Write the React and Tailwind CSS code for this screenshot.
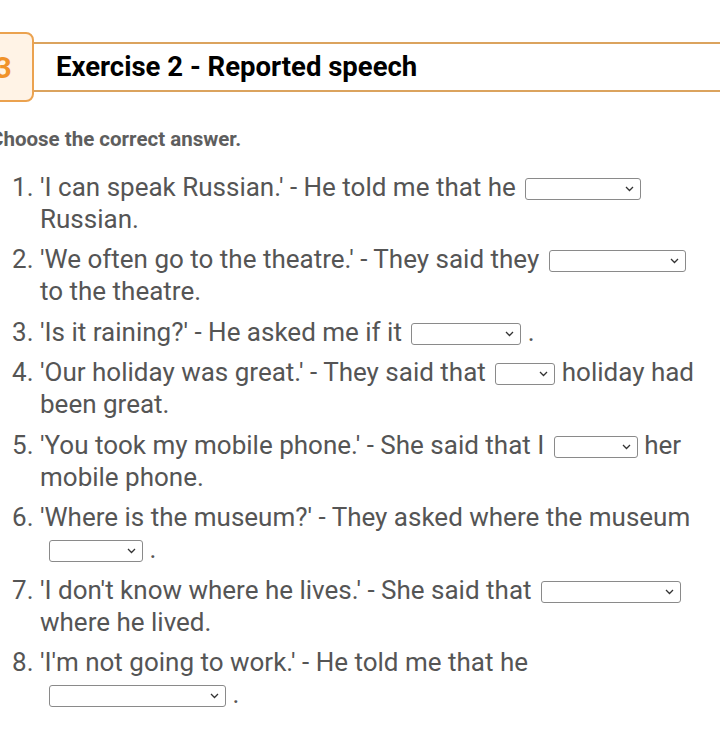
import React from 'react';

// A dropdown placeholder drawn like the browser's empty <select>
function Blank({ w, className = '' }) {
  return (
    <span
      className={`inline-flex h-[22px] items-center justify-end rounded-[3px] border border-[#8a8a8a] bg-white pr-[6px] align-middle ${className}`}
      style={{ width: w }}
    >
      <svg width="9" height="6" viewBox="0 0 9 6" fill="none">
        <path d="M1 1l3.5 3.5L8 1" stroke="#333" strokeWidth="1.3" />
      </svg>
    </span>
  );
}

const items = [
  <>'I can speak Russian.' - He told me that he <Blank w={116} className="ml-[3px]" /> Russian.</>,
  <>'We often go to the theatre.' - They said they <Blank w={137} className="ml-[3px]" /> to the theatre.</>,
  <>'Is it raining?' - He asked me if it <Blank w={110} className="ml-[3px]" /> .</>,
  <>'Our holiday was great.' - They said that <Blank w={60} className="ml-[3px]" /> holiday had been great.</>,
  <>'You took my mobile phone.' - She said that I <Blank w={84} className="ml-[3px]" /> her mobile phone.</>,
  <>'Where is the museum?' - They asked where the museum <Blank w={94} className="ml-[9px]" /> .</>,
  <>'I don't know where he lives.' - She said that <Blank w={140} className="ml-[3px]" /> where he lived.</>,
  <>'I'm not going to work.' - He told me that he <br /><Blank w={177} className="ml-[9px]" /> .</>,
];

export default function App() {
  return (
    <div className="min-h-[744px] w-[720px] overflow-hidden bg-white pt-[32px] font-['Roboto',sans-serif]">
      {/* HEADER BAND */}
      <div className="flex items-center">
        <div className="-ml-[28px] flex h-[70px] w-[62px] shrink-0 items-center justify-center rounded-[8px] border-2 border-[#eba24f] bg-[#fff3e6] text-[30px] font-bold text-[#f0922a]">
          3
        </div>
        <div className="flex h-[50px] flex-1 items-center border-y-2 border-[#dba35e] pl-[22px]">
          <h1 className="text-[27.5px] font-bold text-black">Exercise 2 - Reported speech</h1>
        </div>
      </div>

      <p className="-ml-[10px] mt-[22px] text-[20.5px] font-bold text-[#5e5e5e]">Choose the correct answer.</p>

      {/* QUESTIONS */}
      <ol className="mt-[16px] pr-[12px] text-[26px] leading-[32px] text-[#555]">
        {items.map((content, i) => (
          <li key={i} className="mb-[8.5px] flex pl-[12px]">
            <span className="w-[28px] shrink-0">{i + 1}.</span>
            <span>{content}</span>
          </li>
        ))}
      </ol>
    </div>
  );
}
